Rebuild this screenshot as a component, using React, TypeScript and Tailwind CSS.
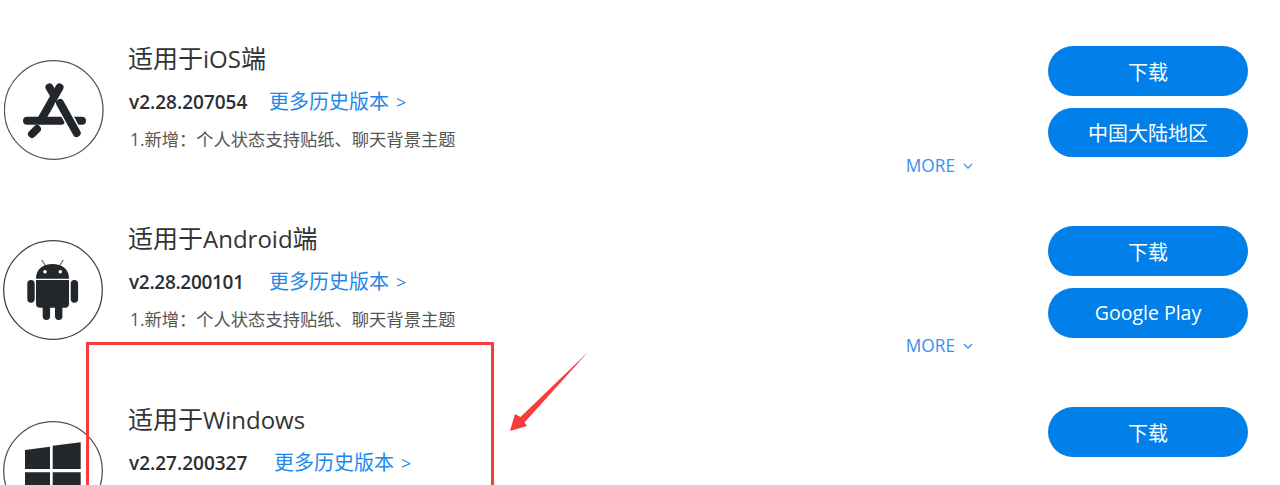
const CJK = "font-['Open_Sans','Noto_Sans_CJK_SC',sans-serif]";

function IosIcon() {
  return (
    <svg width="100" height="100" viewBox="0 0 100 100" fill="none">
      <circle cx="49.7" cy="50" r="49.3" stroke="#555" strokeWidth="1.3" />
      <g stroke="#23272b" strokeWidth="8" strokeLinecap="round">
        <path d="M45.5 27.5 L50 35" />
        <path d="M55.5 27.5 L37 60" />
        <path d="M23 60.7 H57" />
        <path d="M68 60.7 H78" />
        <path d="M33 69 L28 74" />
      </g>
      <path d="M55 41 L73 73.5" stroke="#fff" strokeWidth="11" />
      <path d="M56 43 L72.7 73" stroke="#23272b" strokeWidth="8" strokeLinecap="round" />
    </svg>
  );
}

function AndroidIcon() {
  return (
    <svg width="100" height="100" viewBox="0 0 100 100" fill="none">
      <circle cx="50" cy="50" r="49.3" stroke="#444" strokeWidth="1.3" />
      <path d="M38.7 20 L42.7 26 M60.3 20 L56.3 26" stroke="#666" strokeWidth="1.2" />
      <path d="M33 38.7 C33 29 40 24 49.5 24 C59 24 66 29 66 38.7 Z" fill="#23272b" />
      <circle cx="42" cy="31.7" r="1.8" fill="#fff" />
      <circle cx="57.3" cy="31.7" r="1.8" fill="#fff" />
      <path d="M33 40 H66 V64 Q66 67.7 62 67.7 H37 Q33 67.7 33 64 Z" fill="#23272b" />
      <rect x="24.3" y="40" width="7.4" height="22.7" rx="3.7" fill="#23272b" />
      <rect x="67.7" y="40" width="7.4" height="22.7" rx="3.7" fill="#23272b" />
      <rect x="39.7" y="60" width="7.4" height="20" rx="3.7" fill="#23272b" />
      <rect x="52" y="60" width="7.4" height="20" rx="3.7" fill="#23272b" />
    </svg>
  );
}

function WindowsIcon() {
  return (
    <svg width="100" height="100" viewBox="0 0 100 100" fill="none">
      <circle cx="50" cy="50" r="49.3" stroke="#555" strokeWidth="1.3" />
      <path d="M22 29 L47 25.7 V48 H22 Z" fill="#23272b" />
      <path d="M49.7 24.7 L77.7 21.3 V48 H49.7 Z" fill="#23272b" />
      <path d="M22 51.3 H47 V74 L22 70.5 Z" fill="#23272b" />
      <path d="M49.7 51.3 H77.7 V78.7 L49.7 75.3 Z" fill="#23272b" />
    </svg>
  );
}

function Row({
  icon,
  iconClass,
  rowClass,
  latin,
  suffix,
  version,
  versionClass,
  linkClass,
  desc,
  buttons,
}: {
  icon: React.ReactNode;
  iconClass: string;
  rowClass: string;
  latin: string;
  suffix: string;
  version: string;
  versionClass: string;
  linkClass: string;
  desc: boolean;
  buttons: { label: string; className: string }[];
}) {
  return (
    <div className={rowClass}>
      <div className={iconClass}>{icon}</div>
      <div className="flex w-[847px] shrink-0 flex-col">
        <div className="h-9 text-[25px] leading-9 text-[#333]">
          适用于<span className="text-[24px]">{latin}</span>
          {suffix}
        </div>
        <div className="mt-[11px] flex h-[30px] items-center">
          <span className={versionClass}>{version}</span>
          <span className={linkClass}>
            更多历史版本<span className="ml-[7px] text-[18px]">&gt;</span>
          </span>
        </div>
        {desc && (
          <>
            <div className="mt-[9px] h-7 pl-0.5 text-[17.3px] leading-7 text-[#555]">1.新增：个人状态支持贴纸、聊天背景主题</div>
            <div className="flex h-6 items-center justify-end gap-2 pr-[2px] text-[17.3px] text-[#3b8ff0]">
              <span>MORE</span>
              <svg width="10" height="6" viewBox="0 0 10 6" fill="none" stroke="#3b8ff0" strokeWidth="1.3">
                <path d="M1 1 L5 5 L9 1" />
              </svg>
            </div>
          </>
        )}
      </div>
      <div className="ml-[73px] flex w-[200px] shrink-0 flex-col gap-3 pt-1.5">
        {buttons.map((b) => (
          <div key={b.label} className={b.className}>
            {b.label}
          </div>
        ))}
      </div>
    </div>
  );
}

const btn = "flex h-[50px] items-center justify-center rounded-full bg-[#0080e8] pt-[3px] text-[20px] text-white";
const btnShort = "flex h-[49px] items-center justify-center rounded-full bg-[#0080e8] pt-[2px] text-[20px] text-white";
const btnLatin = "flex h-[50px] items-center justify-center rounded-full bg-[#0080e8] pb-px text-[19.5px] text-white";
const ver = "w-[141px] pl-px text-[19px] font-semibold text-[#2b2f33]";
const verTight = "w-[141px] pl-px text-[19px] font-semibold tracking-[-0.3px] text-[#2b2f33]";

export default function App() {
  return (
    <div className={`relative h-[485px] w-[1280px] overflow-hidden bg-white pt-10 ${CJK}`}>
      <Row
        icon={<IosIcon />}
        rowClass="flex h-[180px] shrink-0"
        iconClass="ml-1 mt-5 mr-6 h-[100px] w-[100px] shrink-0"
        latin="iOS"
        suffix="端"
        version="v2.28.207054"
        versionClass={ver}
        linkClass="text-[20px] text-[#1f87ea]"
        desc
        buttons={[
          { label: "下载", className: btn },
          { label: "中国大陆地区", className: btnShort },
        ]}
      />
      <Row
        icon={<AndroidIcon />}
        rowClass="flex h-[181px] shrink-0"
        iconClass="ml-[3px] mt-5 mr-[25px] h-[100px] w-[100px] shrink-0"
        latin="Android"
        suffix="端"
        version="v2.28.200101"
        versionClass={verTight}
        linkClass="text-[20px] text-[#1f87ea]"
        desc
        buttons={[
          { label: "下载", className: btn },
          { label: "Google Play", className: btnLatin },
        ]}
      />
      <Row
        icon={<WindowsIcon />}
        rowClass="flex h-[180px] shrink-0"
        iconClass="ml-[3px] mt-5 mr-[25px] h-[100px] w-[100px] shrink-0"
        latin="Windows"
        suffix=""
        version="v2.27.200327"
        versionClass={ver}
        linkClass="ml-[5px] text-[20px] text-[#1f87ea]"
        desc={false}
        buttons={[{ label: "下载", className: btn }]}
      />
      <div className="absolute left-[86px] top-[342px] h-[160px] w-[408px] border-[3px] border-[#f83c3c]" />
      <svg className="absolute left-[505px] top-[348px]" width="90" height="90" viewBox="0 0 90 90">
        <path d="M83 4 L15.5 69 L10 66 L5 83 L22 78 L19.5 74.5 Z" fill="#f83c3c" />
      </svg>
    </div>
  );
}
